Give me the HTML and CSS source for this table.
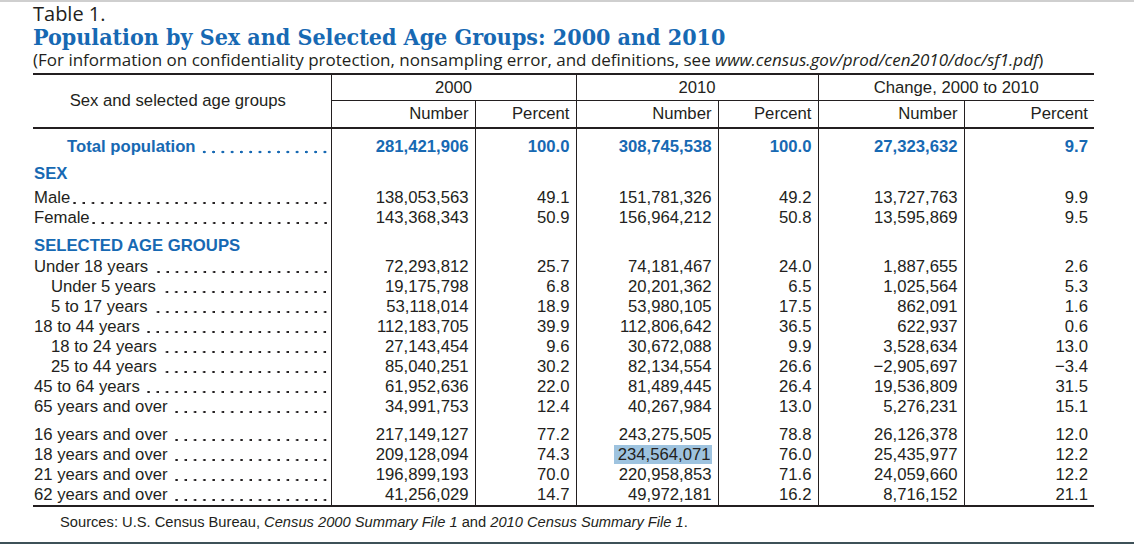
FILE: index.html
```html
<!DOCTYPE html>
<html>
<head>
<meta charset="utf-8">
<link rel="stylesheet" href="styles.css">
</head>
<body>
<div class="page">
  <div class="tnum">Table 1.</div>
  <h1 class="title">Population by Sex and Selected Age Groups: 2000 and 2010</h1>
  <p class="sub">(For information on confidentiality protection, nonsampling error, and definitions, see <i>www.census.gov/prod/cen2010/doc/sf1.pdf</i>)</p>
  <table class="tbl">
    <colgroup>
      <col class="c-stub"><col class="c-n1"><col class="c-p1"><col class="c-n2"><col class="c-p2"><col class="c-n3"><col class="c-p3">
    </colgroup>
    <thead>
      <tr class="hrow1">
        <th rowspan="2" class="stub-h">Sex and selected age groups</th>
        <th colspan="2">2000</th>
        <th colspan="2">2010</th>
        <th colspan="2">Change, 2000 to 2010</th>
      </tr>
      <tr class="hrow2">
        <th>Number</th><th>Percent</th>
        <th>Number</th><th>Percent</th>
        <th>Number</th><th>Percent</th>
      </tr>
    </thead>
    <tbody>
      <tr class="total gap-l">
        <td class="lbl ind2"><div class="lw"><span class="nm">Total population </span><span class="ldr"></span></div></td>
        <td>281,421,906</td><td>100.0</td><td>308,745,538</td><td>100.0</td><td>27,323,632</td><td>9.7</td>
      </tr>
      <tr class="sect gap7">
        <td class="lbl">SEX</td><td></td><td></td><td></td><td></td><td></td><td></td>
      </tr>
      <tr class="gap4">
        <td class="lbl"><div class="lw"><span class="nm">Male</span><span class="ldr"></span></div></td>
        <td>138,053,563</td><td>49.1</td><td>151,781,326</td><td>49.2</td><td>13,727,763</td><td>9.9</td>
      </tr>
      <tr>
        <td class="lbl"><div class="lw"><span class="nm">Female</span><span class="ldr"></span></div></td>
        <td>143,368,343</td><td>50.9</td><td>156,964,212</td><td>50.8</td><td>13,595,869</td><td>9.5</td>
      </tr>
      <tr class="sect gap8">
        <td class="lbl">SELECTED AGE GROUPS</td><td></td><td></td><td></td><td></td><td></td><td></td>
      </tr>
      <tr class="gap1">
        <td class="lbl"><div class="lw"><span class="nm">Under 18 years </span><span class="ldr"></span></div></td>
        <td>72,293,812</td><td>25.7</td><td>74,181,467</td><td>24.0</td><td>1,887,655</td><td>2.6</td>
      </tr>
      <tr>
        <td class="lbl ind1"><div class="lw"><span class="nm">Under 5 years </span><span class="ldr"></span></div></td>
        <td>19,175,798</td><td>6.8</td><td>20,201,362</td><td>6.5</td><td>1,025,564</td><td>5.3</td>
      </tr>
      <tr>
        <td class="lbl ind1"><div class="lw"><span class="nm">5 to 17 years </span><span class="ldr"></span></div></td>
        <td>53,118,014</td><td>18.9</td><td>53,980,105</td><td>17.5</td><td>862,091</td><td>1.6</td>
      </tr>
      <tr>
        <td class="lbl"><div class="lw"><span class="nm">18 to 44 years </span><span class="ldr"></span></div></td>
        <td>112,183,705</td><td>39.9</td><td>112,806,642</td><td>36.5</td><td>622,937</td><td>0.6</td>
      </tr>
      <tr>
        <td class="lbl ind1"><div class="lw"><span class="nm">18 to 24 years </span><span class="ldr"></span></div></td>
        <td>27,143,454</td><td>9.6</td><td>30,672,088</td><td>9.9</td><td>3,528,634</td><td>13.0</td>
      </tr>
      <tr>
        <td class="lbl ind1"><div class="lw"><span class="nm">25 to 44 years </span><span class="ldr"></span></div></td>
        <td>85,040,251</td><td>30.2</td><td>82,134,554</td><td>26.6</td><td>&minus;2,905,697</td><td>&minus;3.4</td>
      </tr>
      <tr>
        <td class="lbl"><div class="lw"><span class="nm">45 to 64 years </span><span class="ldr"></span></div></td>
        <td>61,952,636</td><td>22.0</td><td>81,489,445</td><td>26.4</td><td>19,536,809</td><td>31.5</td>
      </tr>
      <tr>
        <td class="lbl"><div class="lw"><span class="nm">65 years and over </span><span class="ldr"></span></div></td>
        <td>34,991,753</td><td>12.4</td><td>40,267,984</td><td>13.0</td><td>5,276,231</td><td>15.1</td>
      </tr>
      <tr class="gap8">
        <td class="lbl"><div class="lw"><span class="nm">16 years and over </span><span class="ldr"></span></div></td>
        <td>217,149,127</td><td>77.2</td><td>243,275,505</td><td>78.8</td><td>26,126,378</td><td>12.0</td>
      </tr>
      <tr>
        <td class="lbl"><div class="lw"><span class="nm">18 years and over </span><span class="ldr"></span></div></td>
        <td>209,128,094</td><td>74.3</td><td><span class="hl">234,564,071</span></td><td>76.0</td><td>25,435,977</td><td>12.2</td>
      </tr>
      <tr>
        <td class="lbl"><div class="lw"><span class="nm">21 years and over </span><span class="ldr"></span></div></td>
        <td>196,899,193</td><td>70.0</td><td>220,958,853</td><td>71.6</td><td>24,059,660</td><td>12.2</td>
      </tr>
      <tr>
        <td class="lbl"><div class="lw"><span class="nm">62 years and over </span><span class="ldr"></span></div></td>
        <td>41,256,029</td><td>14.7</td><td>49,972,181</td><td>16.2</td><td>8,716,152</td><td>21.1</td>
      </tr>
    </tbody>
  </table>
  <p class="src">Sources: U.S. Census Bureau, <i>Census 2000 Summary File 1</i> and <i>2010 Census Summary File 1</i>.</p>
</div>
</body>
</html>
```

FILE: styles.css
```css
html, body {
  margin: 0;
  padding: 0;
  background: #ffffff;
}
body {
  height: 544px;
  box-sizing: border-box;
  border-top: 2px solid #cfcfcf;
  border-bottom: 2px solid #3e5158;
  overflow: hidden;
  color: #231f20;
}
.page {
  padding-left: 33px;
}
.tnum {
  font-family: "Open Sans", sans-serif;
  font-size: 20px;
  line-height: 22px;
  height: 22px;
  padding-top: 1px;
}
.title {
  margin: 0;
  font-family: "DejaVu Serif", serif;
  font-weight: bold;
  font-stretch: condensed;
  font-size: 23px;
  line-height: 24px;
  color: #1769b3;
}
.sub {
  margin: 0;
  font-family: "Open Sans", sans-serif;
  font-size: 17px;
  line-height: 22px;
}
.tbl {
  border-collapse: collapse;
  table-layout: fixed;
  width: 1061px;
  margin-top: 2px;
  font-family: "Liberation Sans", Arial, sans-serif;
  font-size: 16.7px;
}
.c-stub { width: 298px; }
.c-n1 { width: 144px; }
.c-p1 { width: 101px; }
.c-n2 { width: 142px; }
.c-p2 { width: 100px; }
.c-n3 { width: 146px; }
.c-p3 { width: 130px; }
.tbl thead tr.hrow1 {
  border-top: 2px solid #231f20;
}
.tbl th {
  font-weight: normal;
  height: 25px;
  padding: 0;
  line-height: 20px;
  text-align: center;
  border-left: 1px solid #231f20;
}
.tbl .hrow2 th {
  height: 26px;
}
.tbl th.stub-h {
  border-left: none;
  padding-right: 8px;
}
.tbl .hrow1 th {
  border-bottom: 1px solid #231f20;
}
.tbl .hrow1 th.stub-h {
  border-bottom: 2px solid #231f20;
}
.tbl .hrow2 th {
  text-align: right;
  padding-right: 6px;
  border-bottom: 2px solid #231f20;
}
.tbl tbody tr:last-child td {
  border-bottom: 2px solid #231f20;
}
.tbl td {
  padding: 0 6px 0 0;
  line-height: 20px;
  height: 20px;
  text-align: right;
  white-space: nowrap;
  vertical-align: bottom;
  border-left: 1px solid #231f20;
}
.tbl td.lbl {
  border-left: none;
  text-align: left;
  padding: 0 4px 0 1px;
}
.lw {
  display: flex;
}
.nm {
  white-space: pre;
  flex: none;
}
.ldr {
  flex: 1;
  min-width: 0;
  height: 20px;
  background-image: radial-gradient(circle at 8px 15px, currentColor 0, currentColor 1px, transparent 1.4px);
  background-size: 9.29px 20px;
  background-repeat: repeat-x;
  background-position: right top;
}
.total .ldr {
  background-image: radial-gradient(circle at 8px 15px, currentColor 0, currentColor 1.2px, transparent 1.6px);
}
.tbl td.ind1 { padding-left: 18px; }
.tbl td.ind2 { padding-left: 34px; }
.total td {
  color: #1769b3;
  font-weight: bold;
}
.sect td.lbl {
  color: #1769b3;
  font-weight: bold;
}
.gap-l td { padding-top: 8px; }
.gap8 td { padding-top: 8px; }
.gap7 td { padding-top: 7px; }
.gap4 td { padding-top: 4px; }
.gap1 td { padding-top: 1px; }
.hl {
  background: #9ec3df;
  padding: 0 1px 0 4px;
}
.src {
  margin: 0;
  padding: 6px 0 0 27px;
  font-family: "Liberation Sans", Arial, sans-serif;
  font-size: 14.7px;
  line-height: 18px;
}
```
